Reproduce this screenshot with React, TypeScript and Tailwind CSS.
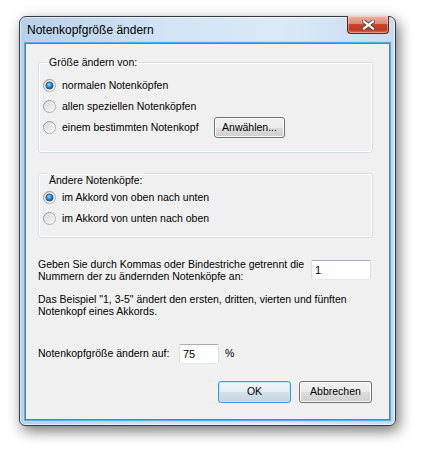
import type { ReactNode } from 'react';

const font = "font-['Liberation_Sans',Arial,sans-serif]";

function Radio({ checked }: { checked?: boolean }) {
  const id = checked ? 'rc' : 'ru';
  return (
    <svg width="13" height="13" viewBox="0 0 13 13" className="shrink-0">
      <defs>
        <linearGradient id={`${id}-ring`} x1="0" y1="0" x2="1" y2="1">
          <stop offset="0" stopColor="#8b8b8b" />
          <stop offset="1" stopColor="#b9b9b9" />
        </linearGradient>
        <linearGradient id={`${id}-fill`} x1="0" y1="0" x2="1" y2="1">
          <stop offset="0" stopColor="#d2d2d2" />
          <stop offset="1" stopColor="#fbfbfb" />
        </linearGradient>
        <radialGradient id={`${id}-dot`} cx="0.42" cy="0.38" r="0.7">
          <stop offset="0" stopColor="#9ee0ff" />
          <stop offset="0.45" stopColor="#2f8fd6" />
          <stop offset="1" stopColor="#0b3f7a" />
        </radialGradient>
      </defs>
      <circle cx="6.5" cy="6.5" r="6" fill={`url(#${id}-fill)`} stroke={`url(#${id}-ring)`} strokeWidth="1" />
      <circle cx="6.5" cy="6.5" r="4.6" fill="none" stroke="#ffffff" strokeOpacity="0.6" strokeWidth="0.8" />
      {checked && <circle cx="6.5" cy="6.5" r="3.6" fill={`url(#${id}-dot)`} stroke="#1a4f86" strokeWidth="0.8" />}
    </svg>
  );
}

function Button({ children, width, primary }: { children: ReactNode; width: string; primary?: boolean }) {
  return (
    <button
      className={`${width} flex h-[22px] items-center justify-center rounded-[3px] border text-[10.5px] text-black ${
        primary
          ? 'border-[#3c9ad6] bg-[linear-gradient(to_bottom,#f0f6fa_0%,#e4eef5_50%,#d2e0ea_50%,#c4d6e2_100%)] shadow-[inset_0_0_0_1px_#c0e6fb]'
          : 'border-[#707070] bg-[linear-gradient(to_bottom,#f2f2f2_0%,#ebebeb_50%,#dddddd_50%,#cfcfcf_100%)] shadow-[inset_0_0_0_1px_#fcfcfc]'
      }`}
    >
      {children}
    </button>
  );
}

function TextBox({ value, width }: { value: string; width: string }) {
  return (
    <div
      className={`${width} flex h-[20px] shrink-0 items-center rounded-[2px] border border-t-[#abadb3] border-l-[#dbdfe6] border-r-[#dbdfe6] border-b-[#e3e9ef] bg-white pl-[3px] text-[11px]`}
    >
      {value}
    </div>
  );
}

function Row({ checked, children }: { checked?: boolean; children: ReactNode }) {
  return (
    <div className="flex h-[21px] items-center gap-[6px]">
      <Radio checked={checked} />
      {children}
    </div>
  );
}

export default function App() {
  return (
    <div className={`h-[454px] w-[424px] bg-white pl-[19px] pt-[16px] text-black ${font}`}>
      <div className="flex h-[410px] w-[377px] flex-col rounded-t-[7px] rounded-b-[6px] border border-[#343c46] bg-[linear-gradient(to_right,#b7d0eb,#d3e4f5_40%,#dce9f7_70%,#c8dcf1)] shadow-[3px_5px_14px_rgba(0,0,0,0.55),inset_0_0_0_1px_rgba(255,255,255,0.55)]">
        <div className="flex h-[26px] shrink-0 items-start justify-between pl-[7px] pr-[6px]">
          <span className="self-center text-[12px] leading-[14px]">Notenkopfgröße ändern</span>
          <div className="-mt-px flex h-[18px] w-[42px] items-center justify-center rounded-b-[4px] border border-t-0 border-[#5e2318] bg-[linear-gradient(to_bottom,#ebb4a5_0%,#dd8a74_45%,#c9452b_50%,#bf3a1f_80%,#dc6d4f_100%)] shadow-[inset_0_0_0_1px_rgba(255,255,255,0.35)]">
            <svg width="13" height="10" viewBox="0 0 13 10">
              <path d="M2 1.5 L11 8.5 M11 1.5 L2 8.5" stroke="#4a4a4a" strokeWidth="4" strokeLinecap="square" />
              <path d="M2 1.5 L11 8.5 M11 1.5 L2 8.5" stroke="#ffffff" strokeWidth="2.2" strokeLinecap="square" />
            </svg>
          </div>
        </div>

        <div className="mx-[5px] flex h-[377px] flex-col border border-[#6f7b88] bg-[#f0f0f0] pl-[12px] text-[10.5px] shadow-[0_0_0_1px_#4fb0ef,0_0_0_2px_#b4dbf6]">
          <fieldset className="mt-[12px] w-[335px] rounded-[3px] border border-[#d5dfe5] pb-[14px] pl-[4px] pt-[6px] shadow-[inset_0_0_0_1px_#ffffff]">
            <legend className="ml-[4px] px-[2px] leading-[13px]">Größe ändern von:</legend>
            <Row checked>
              <span>normalen Notenköpfen</span>
            </Row>
            <Row>
              <span>allen speziellen Notenköpfen</span>
            </Row>
            <Row>
              <span className="w-[146px]">einem bestimmten Notenkopf</span>
              <Button width="w-[71px] !h-[21px]">Anwählen...</Button>
            </Row>
          </fieldset>

          <fieldset className="mt-[6px] w-[335px] rounded-[3px] border border-[#d5dfe5] pb-[8px] pl-[4px] pt-0 shadow-[inset_0_0_0_1px_#ffffff]">
            <legend className="ml-[4px] px-[2px] pt-[15px] leading-[13px]">Ändere Notenköpfe:</legend>
            <Row checked>
              <span>im Akkord von oben nach unten</span>
            </Row>
            <Row>
              <span>im Akkord von unten nach oben</span>
            </Row>
          </fieldset>

          <div className="mt-[20px] flex items-center">
            <p className="w-[273px] leading-[12px]">
              Geben Sie durch Kommas oder Bindestriche getrennt die
              <br />
              Nummern der zu ändernden Notenköpfe an:
            </p>
            <TextBox value="1" width="w-[60px]" />
          </div>

          <p className="mt-[11px] leading-[12px]">
            Das Beispiel "1, 3-5" ändert den ersten, dritten, vierten und fünften
            <br />
            Notenkopf eines Akkords.
          </p>

          <div className="mt-[27px] flex h-[20px] items-center">
            <span className="w-[141px]">Notenkopfgröße ändern auf:</span>
            <TextBox value="75" width="w-[40px]" />
            <span className="ml-[6px]">%</span>
          </div>

          <div className="mt-[17px] flex justify-end gap-[8px] pr-[17px]">
            <Button width="w-[73px]" primary>
              OK
            </Button>
            <Button width="w-[73px]">Abbrechen</Button>
          </div>
        </div>
      </div>
    </div>
  );
}
